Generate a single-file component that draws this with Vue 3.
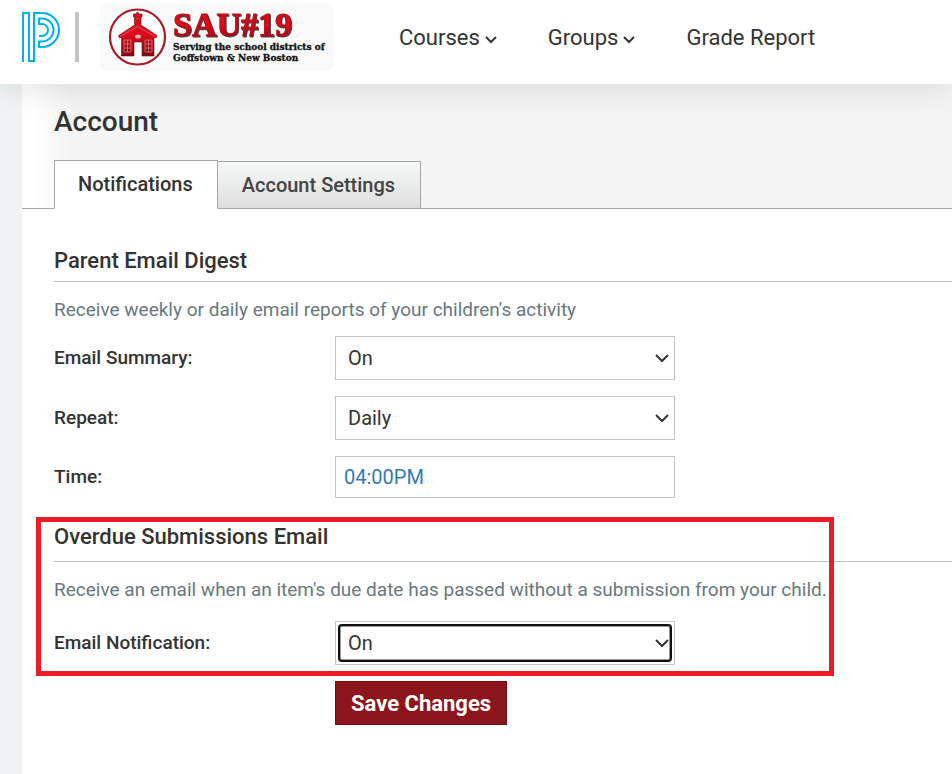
<script setup>
import { ref } from 'vue'

const summary = ref('On')
const repeat = ref('Daily')
const time = ref('04:00PM')
const overdue = ref('On')
</script>

<template>
  <div class="page">
    <header class="top">
      <a class="brand" href="#" aria-label="PowerSchool">
        <svg width="38" height="50" viewBox="0 0 38 50" fill="none" stroke="#00b2f0" stroke-width="2">
          <path d="M1 50V1H7V49H12V1H20A17 17 0 0 1 20 35H17V29.500H20A11.500 11.500 0 0 0 20 6.500H17V12H20A6 6 0 0 1 20 24H17" />
        </svg>
      </a>
      <span class="divider"></span>
      <a class="school" href="#">
        <svg width="234" height="68" viewBox="0 0 234 68">
          <defs>
            <linearGradient id="red" x1="0" y1="0" x2="0" y2="1">
              <stop offset="0" stop-color="#c81420" />
              <stop offset=".5" stop-color="#e00a1a" />
              <stop offset="1" stop-color="#7d0a12" />
            </linearGradient>
          </defs>
          <circle cx="37.500" cy="34" r="27.500" fill="#fff" stroke="#a51d28" stroke-width="2.200" />
          <path d="M37.500 9l2 2h2.500v3h-1v8l16 10.500-1 2.500-2-.8V53H42V39H34V53H21.500V34.200l-2 .8-1-2.500L34.500 22v-8h-1v-3h2z" fill="url(#red)" stroke="#6d1018" stroke-width=".6" />
          <path d="M36.500 15.500h2M20 33.500L37.500 23.500 55 33.500" stroke="#d98a90" stroke-width=".6" fill="none" />
          <g stroke="#d98a90" stroke-width=".7" fill="none">
            <path d="M24 37h7v12h-7zM27.500 37v12M24 41h7M24 45h7M45 37h7v12h-7zM48.500 37v12M45 41h7M45 45h7" />
          </g>
          <ellipse cx="38" cy="33.500" rx="3" ry="2" fill="#e9aeb2" />
          <text class="sau" x="73" y="33">SAU#19</text>
          <text class="motto" x="73" y="47">Serving the school districts of</text>
          <text class="motto" x="73" y="58">Goffstown &amp; New Boston</text>
        </svg>
      </a>
      <nav class="nav">
        <a href="#">Courses<svg class="caret" width="14" height="10" viewBox="0 0 14 10"><path d="M2 2l5 5 5-5" /></svg></a>
        <a href="#">Groups<svg class="caret" width="14" height="10" viewBox="0 0 14 10"><path d="M2 2l5 5 5-5" /></svg></a>
        <a href="#">Grade Report</a>
      </nav>
    </header>

    <main class="main">
      <div class="title-area">
        <h1>Account</h1>
        <div class="tabs">
          <a class="tab active" href="#">Notifications</a>
          <a class="tab" href="#">Account Settings</a>
        </div>
      </div>

      <form class="form" @submit.prevent>
        <section>
          <h2>Parent Email Digest</h2>
          <p>Receive weekly or daily email reports of your children's activity</p>
          <div class="row">
            <label for="summary">Email Summary:</label>
            <div class="field">
              <select id="summary" v-model="summary"><option>On</option><option>Off</option></select>
              <svg class="arrow" width="16" height="12" viewBox="0 0 16 12"><path d="M2 3l6 6 6-6" /></svg>
            </div>
          </div>
          <div class="row">
            <label for="repeat">Repeat:</label>
            <div class="field">
              <select id="repeat" v-model="repeat"><option>Daily</option><option>Weekly</option></select>
              <svg class="arrow" width="16" height="12" viewBox="0 0 16 12"><path d="M2 3l6 6 6-6" /></svg>
            </div>
          </div>
          <div class="row">
            <label for="time">Time:</label>
            <div class="field"><input id="time" v-model="time" type="text"></div>
          </div>
        </section>

        <section class="overdue">
          <h2>Overdue Submissions Email</h2>
          <p>Receive an email when an item's due date has passed without a submission from your child.</p>
          <div class="row">
            <label for="overdue">Email Notification:</label>
            <div class="field focused">
              <select id="overdue" v-model="overdue"><option>On</option><option>Off</option></select>
              <svg class="arrow" width="16" height="12" viewBox="0 0 16 12"><path d="M2 3l6 6 6-6" /></svg>
            </div>
          </div>
          <span class="highlight"></span>
        </section>
        <button class="save" type="submit">Save Changes</button>
      </form>
    </main>
  </div>
</template>

<style>
body {
  background: #fff;
}
</style>

<style scoped>
.page {
  min-height: 100vh;
  display: flex;
  flex-direction: column;
  overflow: hidden;
  font-family: Roboto, "Liberation Sans", sans-serif;
  color: #333;
}
a {
  color: inherit;
  text-decoration: none;
}
.top {
  display: flex;
  align-items: center;
  height: 84px;
  padding: 0 22px;
  box-sizing: border-box;
  background: #fff;
  box-shadow: 0 0 36px rgba(0, 0, 0, 0.14);
  position: relative;
  z-index: 1;
}
.brand,
.school {
  display: flex;
  margin-bottom: 10px;
}
.divider {
  width: 4px;
  height: 50px;
  margin: 0 21px 10px 15px;
  background: #c1c6c8;
}
.school {
  background: #f9f9f9;
  border-radius: 8px;
}
.sau {
  font: bold 34px "Liberation Serif", serif;
  fill: url(#red);
  stroke: #b50d19;
  stroke-width: 1px;
  filter: drop-shadow(1px 1px 0 #444);
}
.motto {
  font: bold 9px "DejaVu Serif", serif;
  fill: #111;
  stroke: #111;
  stroke-width: 0.3px;
}
.nav {
  display: flex;
  gap: 50px;
  margin: 0 0 8px 65px;
  font-size: 22px;
  line-height: 28px;
  white-space: nowrap;
}
.caret {
  margin-left: 4px;
}
.caret path,
.arrow path {
  fill: none;
  stroke: #333;
  stroke-width: 2;
}
.main {
  flex: 1;
  border-left: 22px solid #eff3f4;
}
.title-area {
  padding: 20px 0 0 32px;
  background: linear-gradient(90deg, #fff, #fff 12px, #f4f4f4 48px);
  border-bottom: 1px solid #a6a6a6;
}
h1 {
  margin: 0 0 21px;
  font-size: 28px;
  font-weight: 500;
  line-height: 35px;
}
.tabs {
  display: flex;
  align-items: flex-end;
  margin-bottom: -1px;
}
.tab {
  padding: 0 25px 0 24px;
  border: 1px solid #a6a6a6;
  border-left: 0;
  background: linear-gradient(#f6f8f8, #dedede);
  color: #444;
  font-size: 20px;
  font-weight: 500;
  line-height: 46px;
}
.tab.active {
  padding: 0 24px 0 23px;
  border-left: 1px solid #a6a6a6;
  border-bottom-color: #fff;
  background: #fff;
  color: #333;
  line-height: 47px;
}
.form {
  padding: 37px 0 48px 32px;
}
h2 {
  margin: 0 0 15px;
  padding-bottom: 5px;
  border-bottom: 1px solid #c4c4c4;
  font-size: 22px;
  font-weight: 500;
  line-height: 30px;
}
p {
  margin: 0 0 13px;
  color: #677880;
  font-size: 19px;
  line-height: 26px;
}
.row {
  display: grid;
  grid-template-columns: 281px 340px;
  align-items: center;
  margin-bottom: 16px;
}
label {
  padding-bottom: 2px;
  font-size: 19px;
  font-weight: 500;
}
.field {
  position: relative;
  display: flex;
}
select,
input {
  width: 100%;
  height: 44px;
  box-sizing: border-box;
  border: 1px solid #c4c4c4;
  border-radius: 0;
  background: #fff;
  color: #333;
  font: 20px Roboto, "Liberation Sans", sans-serif;
}
select {
  appearance: none;
  padding: 0 12px;
}
input {
  height: 42px;
  padding: 0 8px;
  color: #337ab7;
}
.arrow {
  position: absolute;
  right: 5px;
  top: 16px;
  pointer-events: none;
}
.focused::after {
  content: "";
  position: absolute;
  inset: 3px;
  border: 2px solid #101010;
  border-radius: 4px;
  box-shadow: inset 0 0 0 1px #999;
  pointer-events: none;
}
.overdue {
  position: relative;
  margin-top: 24px;
}
.overdue h2 {
  padding-bottom: 9px;
}
.overdue p {
  margin-bottom: 18px;
}
.highlight {
  position: absolute;
  left: -18px;
  top: -5px;
  width: 798px;
  height: 159px;
  box-sizing: border-box;
  border: 5px solid #ed1c24;
  pointer-events: none;
}
.save {
  height: 44px;
  margin-left: 281px;
  padding: 0 15px;
  border: 1px solid #6f0e15;
  background: #8c151c;
  color: #fff;
  font: bold 22px Roboto, "Liberation Sans", sans-serif;
}
</style>
